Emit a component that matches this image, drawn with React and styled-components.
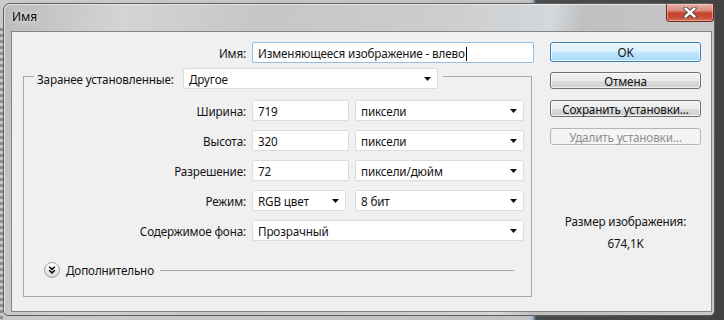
import React from "react";
import styled, { createGlobalStyle } from "styled-components";

const GlobalStyle = createGlobalStyle`
  html, body {
    margin: 0;
    height: 320px;
    overflow: hidden;
  }
  body {
    background:
      repeating-linear-gradient(to bottom, #8e8e8e 0 3px, #c6c6c6 3px 6px) 0 28px / 3px 100% no-repeat,
      linear-gradient(to right, #cacaca 0, #c2c2c2 530px, #8fb3cf 533px, #4c4c4c 536px, #424242 100%);
    font-family: "Noto Sans", "Open Sans", sans-serif;
  }
  #root {
    padding: 3px 0 0 3px;
  }
`;

const Window = styled.div`
  box-sizing: border-box;
  width: 712px;
  height: 313px;
  display: flex;
  flex-direction: column;
  border: 1px solid #5d5d5d;
  border-radius: 7px 7px 5px 5px;
  padding: 0 2px 3px 7px;
  background: linear-gradient(
    100deg,
    #bcbcbc 0%,
    #d4d4d4 16%,
    #c6c6c6 34%,
    #cdcdcd 58%,
    #d3d8dc 72%,
    #c0c0c0 76%,
    #cacaca 100%
  );
  box-shadow: inset 1px 1px 0 rgba(255, 255, 255, 0.55);
`;

const TitleBar = styled.div`
  height: 27px;
  margin: 0 -2px 0 -7px;
  display: flex;
  align-items: flex-start;
  justify-content: space-between;
`;

const Title = styled.div`
  padding: 6px 0 0 8px;
  font-family: "Noto Sans", "Open Sans", sans-serif;
  font-size: 12px;
  line-height: 14px;
  color: #0b0b0b;
  text-shadow: 0 0 6px rgba(255, 255, 255, 0.9);
`;

const CloseButton = styled.div`
  box-sizing: border-box;
  width: 48px;
  height: 18px;
  display: flex;
  align-items: center;
  justify-content: center;
  border: 1px solid #6a2b22;
  border-top: none;
  border-radius: 0 0 4px 4px;
  background: linear-gradient(
    to bottom,
    #e7b2a4 0%,
    #d88b7b 40%,
    #c5452f 52%,
    #c94c36 80%,
    #d8735c 100%
  );
  box-shadow: inset 0 0 0 1px rgba(255, 220, 210, 0.45);
`;

const Client = styled.div`
  flex: 1;
  box-sizing: border-box;
  display: flex;
  border: 1px solid #858585;
  background: #f0f0f0;
  padding: 10px 0 0 11px;
  font-family: "Noto Sans", "Open Sans", sans-serif;
  font-size: 11.7px;
  letter-spacing: -0.15px;
  color: #141414;
`;

const LeftCol = styled.div`
  width: 511px;
  display: flex;
  flex-direction: column;
`;

const NameRow = styled.div`
  display: grid;
  grid-template-columns: 223px 282px;
  column-gap: 6px;
  height: 21px;
  align-items: center;
`;

const Label = styled.div`
  text-align: right;
  white-space: nowrap;
  line-height: 16px;
`;

const Field = styled.div`
  box-sizing: border-box;
  height: 21px;
  width: ${(p) => (p.$w ? `${p.$w}px` : "auto")};
  grid-column: ${(p) => p.$span || "auto"};
  display: flex;
  align-items: center;
  padding: 0 6px 0 5px;
  border: 1px solid ${(p) => (p.$focus ? "#93bde4" : "#dcdcdc")};
  border-radius: 2px;
  background: #fff;
  white-space: nowrap;
  line-height: 16px;
`;

const Value = styled.span`
  flex: 1;
`;

const Caret = styled.span`
  display: inline-block;
  width: 1px;
  height: 14px;
  margin-left: 1px;
  background: #000;
  vertical-align: -3px;
`;

const Group = styled.div`
  margin-top: 5px;
  width: 509px;
`;

const GroupHeader = styled.div`
  display: flex;
  height: 21px;
`;

const EdgeLeft = styled.div`
  box-sizing: border-box;
  width: 11px;
  margin-top: 8px;
  border-top: 1px solid #a9a9a9;
  border-left: 1px solid #a9a9a9;
`;

const EdgeRight = styled.div`
  box-sizing: border-box;
  flex: 1;
  margin: 8px 0 0 5px;
  border-top: 1px solid #a9a9a9;
  border-right: 1px solid #a9a9a9;
`;

const Legend = styled.div`
  box-sizing: border-box;
  width: 149px;
  padding-left: 3px;
  display: flex;
  align-items: center;
  white-space: nowrap;
  line-height: 16px;
`;

const GroupBody = styled.div`
  border: 1px solid #a9a9a9;
  border-top: none;
  padding: 11px 0 18px 0;
`;

const FieldGrid = styled.div`
  display: grid;
  grid-template-columns: 222px 97px 169px;
  grid-auto-rows: 21px;
  column-gap: 6px;
  row-gap: 9px;
  align-items: center;
`;

const AdvRow = styled.div`
  margin-top: 21px;
  height: 16px;
  display: flex;
  align-items: center;
  padding: 0 17px 0 20px;
`;

const AdvText = styled.span`
  margin-left: 6px;
  line-height: 16px;
  white-space: nowrap;
`;

const Rule = styled.div`
  flex: 1;
  height: 1px;
  margin: 0 0 0 6px;
  background: #a6a6a6;
`;

const RightCol = styled.div`
  margin-left: 16px;
  width: 151px;
  display: flex;
  flex-direction: column;
`;

const Button = styled.div`
  box-sizing: border-box;
  height: ${(p) => (p.$default ? 20 : 17)}px;
  margin-top: ${(p) => p.$mt || 0}px;
  display: flex;
  align-items: center;
  justify-content: center;
  border-radius: 3px;
  line-height: 14px;
  white-space: nowrap;
  color: ${(p) => (p.$disabled ? "#8f8f8f" : "#111")};
  border: 1px solid
    ${(p) => (p.$default ? "#3c7fb1" : p.$disabled ? "#b5b5b5" : "#707070")};
  background: ${(p) =>
    p.$default
      ? "linear-gradient(to bottom, #eaf6fd 0%, #d9f0fc 50%, #bee6fd 51%, #a7d9f5 100%)"
      : p.$disabled
      ? "#f4f4f4"
      : "linear-gradient(to bottom, #f2f2f2 0%, #ebebeb 50%, #dddddd 51%, #cfcfcf 100%)"};
  box-shadow: ${(p) =>
    p.$disabled ? "none" : "inset 0 0 0 1px rgba(255,255,255,0.7)"};
`;

const SizeInfo = styled.div`
  margin-top: 68px;
  display: flex;
  flex-direction: column;
  gap: 6px;
  text-align: center;
  line-height: 16px;
`;

const ArrowIcon = () => (
  <svg width="7" height="4" viewBox="0 0 7 4">
    <polygon points="0,0 7,0 3.5,4" fill="#111" />
  </svg>
);

const Select = ({ value, w, span }) => (
  <Field $w={w} $span={span}>
    <Value>{value}</Value>
    <ArrowIcon />
  </Field>
);

const ChevronIcon = () => (
  <svg width="16" height="16" viewBox="0 0 16 16">
    <defs>
      <linearGradient id="chev" x1="0" y1="0" x2="0" y2="1">
        <stop offset="0" stopColor="#ffffff" />
        <stop offset="1" stopColor="#d6d6d6" />
      </linearGradient>
    </defs>
    <circle cx="8" cy="8" r="7.5" fill="url(#chev)" stroke="#a2a2a2" />
    <path
      d="M5.2 4.8 L8 7.4 L10.8 4.8 M5.2 8.3 L8 10.9 L10.8 8.3"
      fill="none"
      stroke="#111"
      strokeWidth="1.5"
    />
  </svg>
);

const CloseIcon = () => (
  <svg width="14" height="11" viewBox="0 0 14 11">
    <path
      d="M2.5 1.5 L11.5 9.5 M11.5 1.5 L2.5 9.5"
      stroke="#3d3d3d"
      strokeWidth="4.2"
      strokeLinecap="round"
    />
    <path
      d="M2.5 1.5 L11.5 9.5 M11.5 1.5 L2.5 9.5"
      stroke="#ffffff"
      strokeWidth="2.4"
      strokeLinecap="round"
    />
  </svg>
);

export default function App() {
  return (
    <>
      <GlobalStyle />
      <Window>
        <TitleBar>
          <Title>Имя</Title>
          <CloseButton>
            <CloseIcon />
          </CloseButton>
        </TitleBar>
        <Client>
          <LeftCol>
            <NameRow>
              <Label>Имя:</Label>
              <Field $focus>
                <span>
                  Изменяющееся изображение - влево
                  <Caret />
                </span>
              </Field>
            </NameRow>
            <Group>
              <GroupHeader>
                <EdgeLeft />
                <Legend>Заранее установленные:</Legend>
                <Select value="Другое" w={255} />
                <EdgeRight />
              </GroupHeader>
              <GroupBody>
                <FieldGrid>
                  <Label>Ширина:</Label>
                  <Field>719</Field>
                  <Select value="пиксели" />
                  <Label>Высота:</Label>
                  <Field>320</Field>
                  <Select value="пиксели" />
                  <Label>Разрешение:</Label>
                  <Field>72</Field>
                  <Select value="пиксели/дюйм" />
                  <Label>Режим:</Label>
                  <Select value="RGB цвет" w={94} />
                  <Select value="8 бит" />
                  <Label>Содержимое фона:</Label>
                  <Select value="Прозрачный" span="2 / 4" />
                </FieldGrid>
                <AdvRow>
                  <ChevronIcon />
                  <AdvText>Дополнительно</AdvText>
                  <Rule />
                </AdvRow>
              </GroupBody>
            </Group>
          </LeftCol>
          <RightCol>
            <Button $default>OK</Button>
            <Button $mt={10}>Отмена</Button>
            <Button $mt={11}>Сохранить установки...</Button>
            <Button $mt={11} $disabled>
              Удалить установки...
            </Button>
            <SizeInfo>
              <div>Размер изображения:</div>
              <div>674,1K</div>
            </SizeInfo>
          </RightCol>
        </Client>
      </Window>
    </>
  );
}
